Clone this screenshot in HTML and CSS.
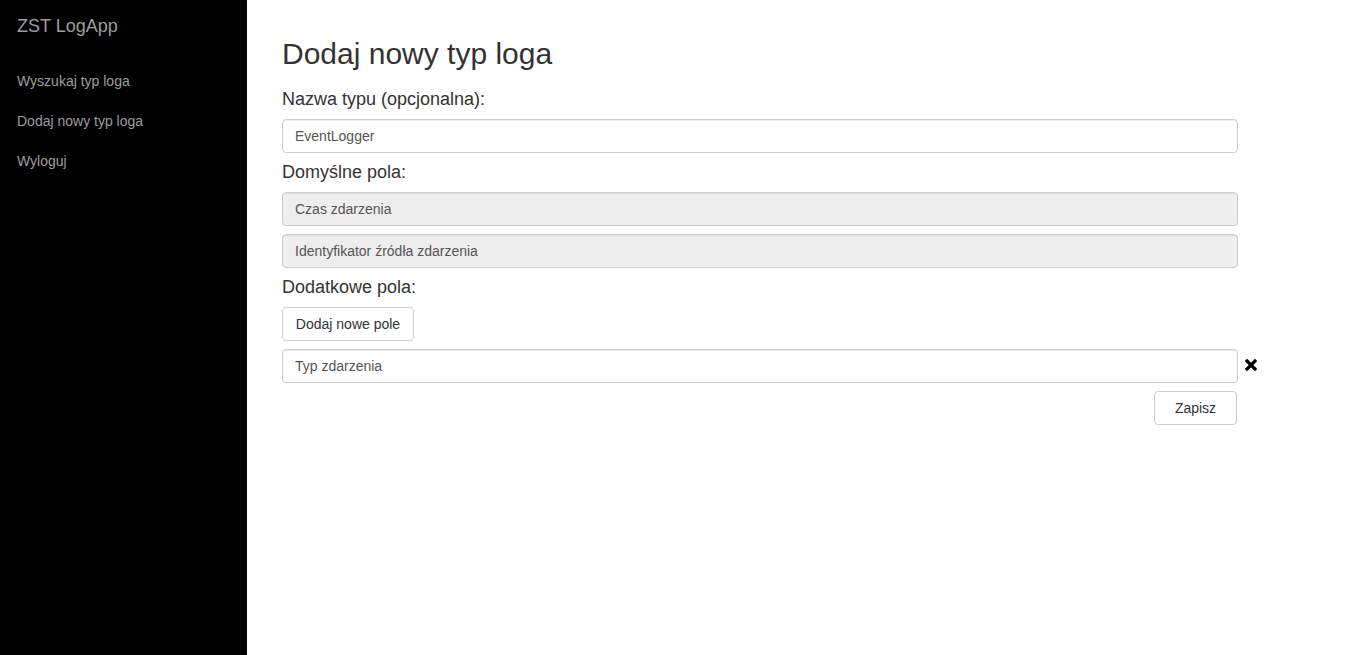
FILE: index.html
```html
<!DOCTYPE html>
<html lang="pl">
<head>
<meta charset="utf-8">
<title>ZST LogApp</title>
<link rel="stylesheet" href="styles.css">
</head>
<body>
<aside class="sidebar">
  <div class="brand">ZST LogApp</div>
  <nav class="nav">
    <a href="#">Wyszukaj typ loga</a>
    <a href="#">Dodaj nowy typ loga</a>
    <a href="#">Wyloguj</a>
  </nav>
</aside>
<main class="main">
  <h1 class="title">Dodaj nowy typ loga</h1>
  <form class="form">
    <div class="section-label">Nazwa typu (opcjonalna):</div>
    <input class="field" type="text" value="EventLogger">
    <div class="section-label">Domyślne pola:</div>
    <div class="stack">
      <input class="field" type="text" value="Czas zdarzenia" disabled>
      <input class="field" type="text" value="Identyfikator źródła zdarzenia" disabled>
    </div>
    <div class="section-label">Dodatkowe pola:</div>
    <div class="stack">
      <div><button type="button" class="btn btn-add">Dodaj nowe pole</button></div>
      <div class="field-row">
        <input class="field" type="text" value="Typ zdarzenia">
        <span class="remove" aria-label="usuń">
          <svg width="12" height="12" viewBox="0 0 12 12"><path d="M2 2 L10 10 M10 2 L2 10" stroke="#000" stroke-width="3.2" stroke-linecap="square"/></svg>
        </span>
      </div>
      <div class="actions"><button type="button" class="btn btn-save">Zapisz</button></div>
    </div>
  </form>
</main>
</body>
</html>
```

FILE: styles.css
```css
html, body {
  margin: 0;
  height: 100%;
}
body {
  display: flex;
  font-family: "Liberation Sans", Arial, sans-serif;
  font-size: 14px;
  line-height: 20px;
  color: #333;
  background: #fff;
}
.sidebar {
  width: 247px;
  flex: 0 0 247px;
  background: #000;
  min-height: 100%;
}
.brand {
  padding: 16px 17px 14px;
  font-size: 18px;
  line-height: 20px;
  color: #9d9d9d;
}
.nav {
  display: flex;
  flex-direction: column;
  margin-top: 11px;
}
.nav a {
  padding: 10px 17px;
  color: #9d9d9d;
  text-decoration: none;
  font-size: 14px;
  line-height: 20px;
}
.main {
  flex: 1;
  padding: 37px 35px 0;
}
.title {
  margin: 0;
  font-size: 30px;
  font-weight: 500;
  line-height: 33px;
  color: #333;
}
.form {
  width: 956px;
  display: flex;
  flex-direction: column;
}
.section-label {
  font-size: 18px;
  line-height: 20px;
  margin: 19px 0 10px;
}
.form > .field + .section-label,
.stack + .section-label {
  margin-top: 9px;
}
.stack {
  display: flex;
  flex-direction: column;
  gap: 8px;
}
.field {
  box-sizing: border-box;
  display: block;
  width: 956px;
  height: 34px;
  padding: 6px 12px;
  font-family: inherit;
  font-size: 14px;
  line-height: 20px;
  color: #555;
  background: #fff;
  border: 1px solid #ccc;
  border-radius: 4px;
  box-shadow: inset 0 1px 1px rgba(0,0,0,.075);
  margin: 0;
}
.field:disabled {
  background: #eee;
  color: #555;
  opacity: 1;
}
.field-row {
  display: flex;
  align-items: center;
  position: relative;
}
.remove {
  position: absolute;
  left: 963px;
  top: 10px;
  width: 12px;
  height: 12px;
  display: block;
}
.remove svg {
  display: block;
}
.btn {
  box-sizing: border-box;
  height: 34px;
  padding: 6px 12px;
  font-family: inherit;
  font-size: 14px;
  line-height: 20px;
  color: #333;
  background: #fff;
  border: 1px solid #ccc;
  border-radius: 4px;
  cursor: pointer;
}
.btn-add {
  width: 132px;
}
.actions {
  display: flex;
  justify-content: flex-end;
  padding-right: 1px;
}
.btn-save {
  width: 83px;
}
```
